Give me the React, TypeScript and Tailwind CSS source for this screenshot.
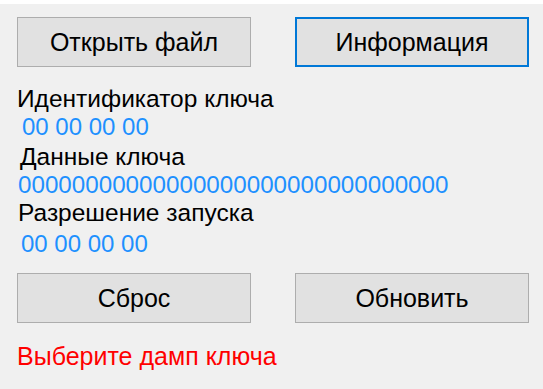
import React from 'react'

// Кнопка в стиле WinForms
function WinButton({ label, focused = false }: { label: string; focused?: boolean }) {
  return (
    <button
      type="button"
      className={
        'w-[234px] h-[50px] bg-[#e1e1e1] text-black text-[25px] leading-none ' +
        (focused ? 'border-2 border-[#0078d7]' : 'border border-[#adadad]')
      }
    >
      {label}
    </button>
  )
}

export default function App() {
  return (
    <div
      className="w-[543px] h-[389px] bg-[#f0f0f0] border-t-4 border-white flex flex-col pl-[17px] text-black text-[24.5px]"
      style={{ fontFamily: '"Liberation Sans", Arial, sans-serif' }}
    >
      {/* верхние кнопки */}
      <div className="flex gap-[44px] mt-[13px]">
        <WinButton label="Открыть файл" />
        <WinButton label="Информация" focused />
      </div>

      {/* данные ключа */}
      <div className="h-[28px] leading-[28px] mt-[18px]">Идентификатор ключа</div>
      <div className="h-[28px] leading-[28px] ml-[5px] text-[24px] text-[#1e90ff]">00 00 00 00</div>
      <div className="h-[28px] leading-[28px] mt-[2px] ml-[3px]">Данные ключа</div>
      <div className="h-[28px] leading-[28px] ml-[1px] text-[24.2px] text-[#1e90ff]">00000000000000000000000000000000</div>
      <div className="h-[28px] leading-[28px] ml-[1px]">Разрешение запуска</div>
      <div className="h-[28px] leading-[28px] mt-[3px] ml-[4px] text-[24px] text-[#1e90ff]">00 00 00 00</div>

      {/* нижние кнопки */}
      <div className="flex gap-[44px] mt-[15px]">
        <WinButton label="Сброс" />
        <WinButton label="Обновить" />
      </div>

      <div className="h-[28px] leading-[28px] mt-[19px] text-[25px] text-[#ff0000]">Выберите дамп ключа</div>
    </div>
  )
}
